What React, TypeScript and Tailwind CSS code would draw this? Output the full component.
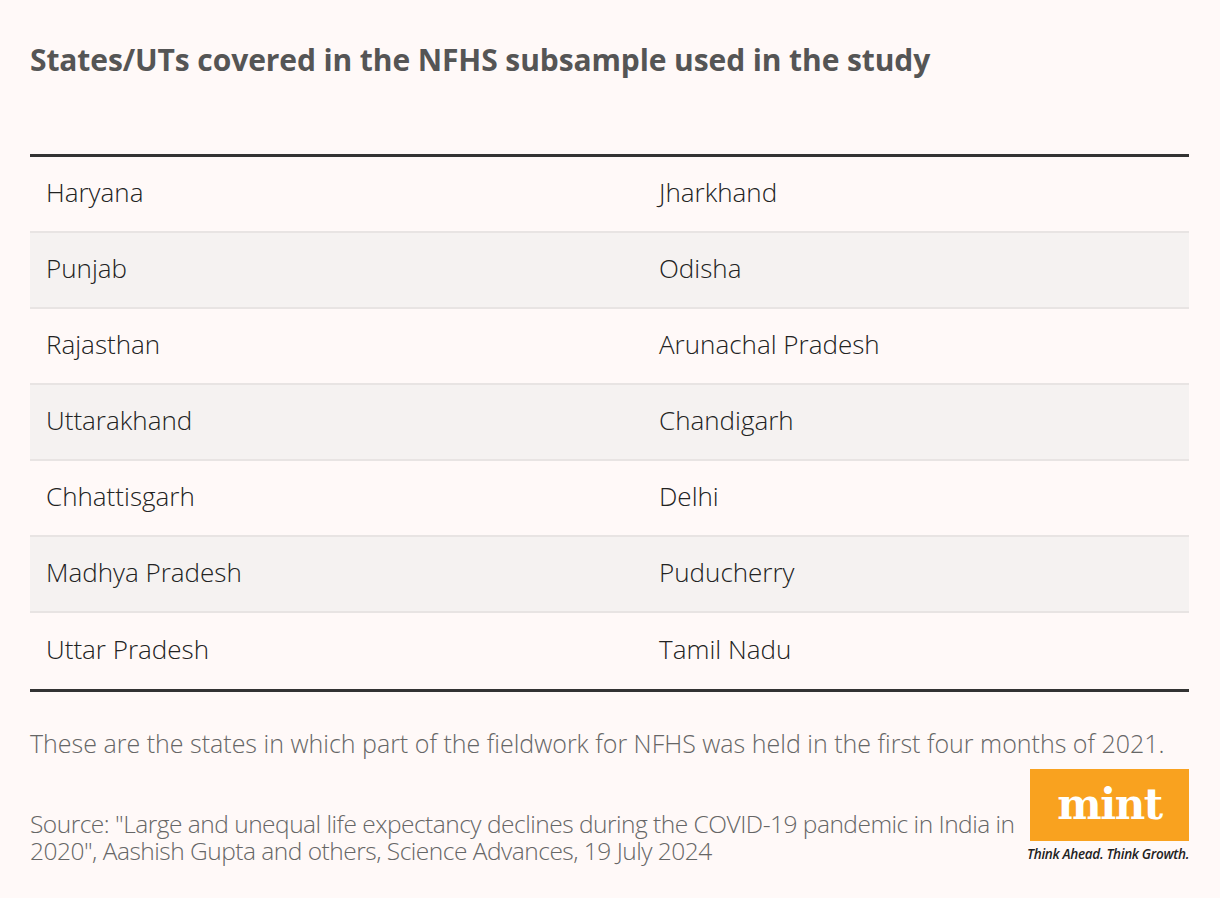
const rows: [string, string][] = [
  ["Haryana", "Jharkhand"],
  ["Punjab", "Odisha"],
  ["Rajasthan", "Arunachal Pradesh"],
  ["Uttarakhand", "Chandigarh"],
  ["Chhattisgarh", "Delhi"],
  ["Madhya Pradesh", "Puducherry"],
  ["Uttar Pradesh", "Tamil Nadu"],
];

export default function App() {
  return (
    <div className="min-h-[898px] w-[1220px] bg-[#fff9f8] px-[30px] pt-[38px] font-['Open_Sans',sans-serif] text-[#333]">
      <h1 className="text-[30px] font-bold leading-[44px] tracking-[-0.1px] text-[#555]">
        States/UTs covered in the NFHS subsample used in the study
      </h1>

      <div className="mt-[72px] w-[1159px] border-y-[3px] border-[#333]">
        {rows.map(([a, b], i) => (
          <div
            key={a}
            className={`grid h-[76px] grid-cols-[613px_1fr] items-center pb-[3px] text-[26px] font-light text-[#222] ${
              i % 2 === 1 ? "bg-[#f5f2f1]" : ""
            } ${i < rows.length - 1 ? "border-b-2 border-[#e8e4e3]" : ""}`}
          >
            <div className="pl-4">{a}</div>
            <div className="pl-4">{b}</div>
          </div>
        ))}
      </div>

      <p className="mt-[38px] text-[25px] font-light leading-[27px] text-[#666]">
        These are the states in which part of the fieldwork for NFHS was held in the first four months of 2021.
      </p>

      <div className="mt-[12px] flex w-[1159px] items-start justify-between">
        <p className="mt-[41px] min-w-0 flex-1 pr-2 text-[24.5px] font-light leading-[27px] tracking-[-0.5px] text-[#666]">
          Source: "Large and unequal life expectancy declines during the COVID-19 pandemic in India in 2020", Aashish Gupta and others, Science Advances, 19 July 2024
        </p>
        <div className="flex shrink-0 flex-col items-end">
          <div className="flex h-[72px] w-[159px] items-center justify-center bg-[#f9a21f]">
            <span className="font-['DejaVu_Serif',serif] text-[42px] font-bold leading-none tracking-[-1.5px] text-white">
              mint
            </span>
          </div>
          <span className="mt-[5px] text-[13.5px] font-semibold italic leading-[16px] tracking-[-0.3px] text-[#222]">
            Think Ahead. Think Growth.
          </span>
        </div>
      </div>
    </div>
  );
}
